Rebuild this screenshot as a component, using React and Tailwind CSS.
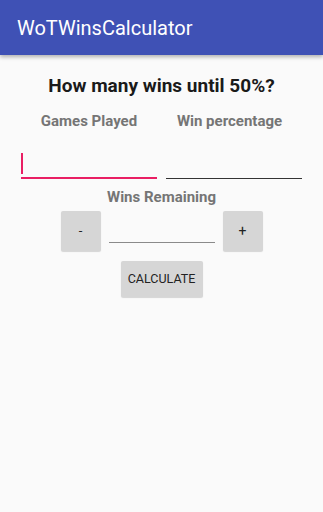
export default function App() {
  return (
    <div
      className="min-h-[512px] w-[323px] bg-[#fafafa]"
      style={{ fontFamily: "Roboto, 'Liberation Sans', sans-serif" }}
    >
      <header className="relative z-10 flex h-[55px] items-center bg-[#3f51b5] pl-[17px] shadow-[0_2px_4px_rgba(0,0,0,0.3)]">
        <h1 className="text-[20px] leading-none text-white">WoTWinsCalculator</h1>
      </header>

      <h2 className="mt-[20px] text-center text-[19px] font-bold leading-[22px] text-[#1a1a1a]">
        How many wins until 50%?
      </h2>

      <div className="mt-[14px] flex px-[21px] text-[15px] font-bold leading-[20px] text-[#757575]">
        <div className="w-[136px] text-center">Games Played</div>
        <div className="ml-[9px] w-[136px] pr-[9px] text-center">Win percentage</div>
      </div>

      <div className="mt-[22px] flex gap-[9px] px-[21px]">
        <div className="relative h-[26px] w-[136px] border-b-2 border-[#e91e63]">
          <span className="absolute left-0 top-0 h-[21px] w-[2px] bg-[#e91e63]" />
        </div>
        <div className="mt-[1px] h-[25px] w-[136px] border-b border-[#333]" />
      </div>

      <div className="mt-[8px] text-center text-[15px] font-bold leading-[20px] text-[#757575]">
        Wins Remaining
      </div>

      <div className="mt-[4px] flex items-start justify-center">
        <button className="h-[40px] w-[40px] rounded-[2px] bg-[#d6d6d6] text-[13px] text-[#222] shadow-[0_1px_1px_rgba(0,0,0,0.15)]">
          -
        </button>
        <div className="mx-[8px] mt-[31px] h-[1px] w-[106px] bg-[#8a8a8a]" />
        <button className="h-[40px] w-[40px] rounded-[2px] bg-[#d6d6d6] text-[14px] text-[#222] shadow-[0_1px_1px_rgba(0,0,0,0.15)]">
          +
        </button>
      </div>

      <div className="mt-[10px] flex justify-center">
        <button className="h-[36px] w-[82px] rounded-[2px] bg-[#d6d6d6] text-[12.5px] text-[#222] shadow-[0_1px_1px_rgba(0,0,0,0.15)]">
          CALCULATE
        </button>
      </div>
    </div>
  );
}
